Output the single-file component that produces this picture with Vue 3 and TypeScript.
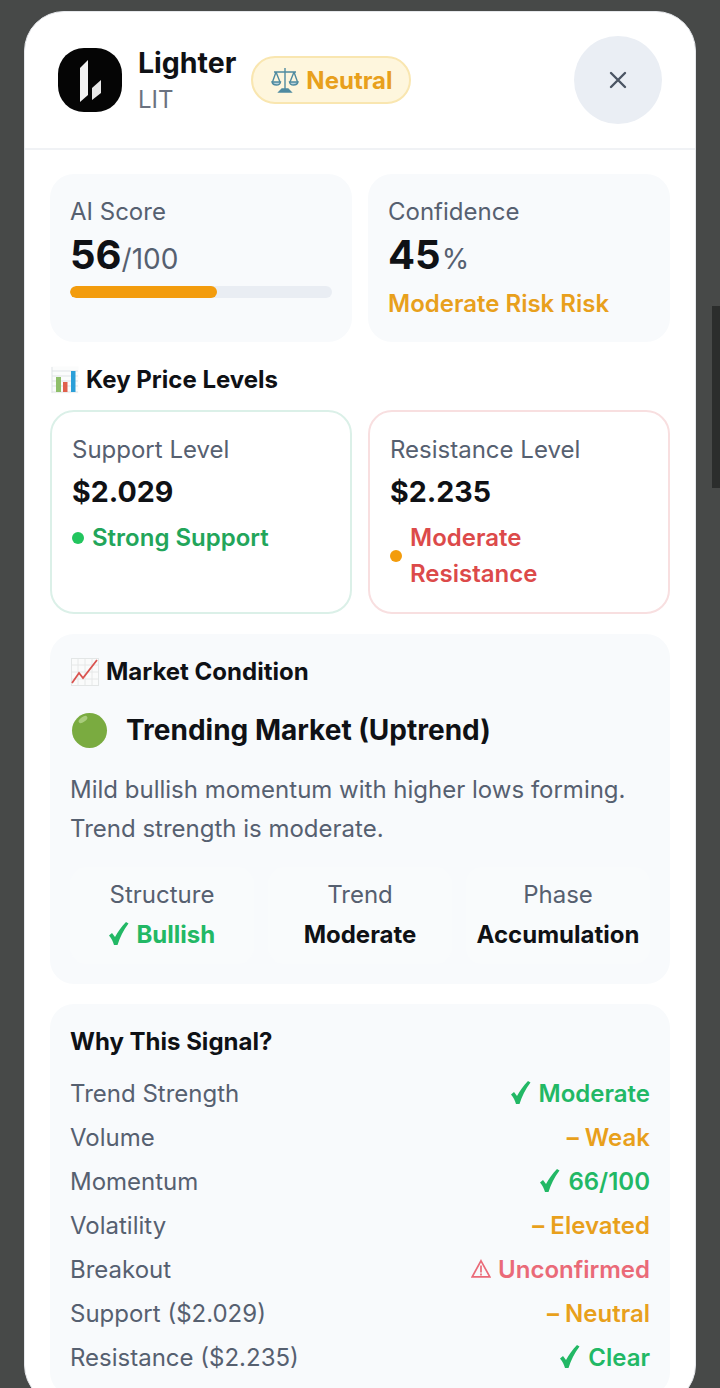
<script setup lang="ts">
interface Row {
  label: string
  mark: string
  value: string
  tone: 'good' | 'warn' | 'bad'
}
const rows: Row[] = [
  { label: 'Trend Strength', mark: '✓', value: 'Moderate', tone: 'good' },
  { label: 'Volume', mark: '–', value: 'Weak', tone: 'warn' },
  { label: 'Momentum', mark: '✓', value: '66/100', tone: 'good' },
  { label: 'Volatility', mark: '–', value: 'Elevated', tone: 'warn' },
  { label: 'Breakout', mark: '⚠', value: 'Unconfirmed', tone: 'bad' },
  { label: 'Support ($2.029)', mark: '–', value: 'Neutral', tone: 'warn' },
  { label: 'Resistance ($2.235)', mark: '✓', value: 'Clear', tone: 'good' },
]
const score = 56
const checkPath = 'M0 13.5 L3 11 L6 15 C9 9.5 12.5 4.5 17 0 L19.5 1.5 C14.5 8 11 15 8.5 23 L5 23 C4 19.5 2.5 16.5 0 13.5 Z'
</script>

<template>
  <div class="page">
    <div class="scrollbar"></div>
    <div class="modal">
      <header class="head">
        <svg class="logo" viewBox="0 0 64 64">
          <rect width="64" height="64" rx="26" fill="#050505" />
          <path d="M22 20 L30 12 L30 47 L22 54 Z" fill="#f2f2f2" />
          <path d="M34 40 L43 32 L43 45 L34 52 Z" fill="#e8e8e8" />
        </svg>
        <div class="coin">
          <div class="coin-name">Lighter</div>
          <div class="coin-sym">LIT</div>
        </div>
        <div class="badge">
          <svg class="scales" viewBox="0 0 28 28" fill="none" stroke="#4f8ba0" stroke-width="1.4">
            <path d="M14 2 V24 M3 6 H25 M5 6 L1.5 16 M5 6 L9 16 M23 6 L19 16 M23 6 L26.5 16" />
            <path d="M1 16 H9.5 C9 20 2 20 1 16 Z M18.5 16 H27 C26 20 19 20 18.5 16 Z" fill="#b9d3dc" />
            <path d="M8 26 H20 L17 23 H11 Z" fill="#4f8ba0" />
          </svg>
          <span>Neutral</span>
        </div>
        <button class="close">
          <svg viewBox="0 0 20 20" width="20" height="20" stroke="#4b5563" stroke-width="2.4" stroke-linecap="round">
            <path d="M3 3 L17 17 M17 3 L3 17" />
          </svg>
        </button>
      </header>

      <div class="body">
        <div class="two">
          <div class="tile">
            <div class="label">AI Score</div>
            <div class="big">{{ score }}<small>/100</small></div>
            <div class="track"><div class="fill" :style="{ width: score + '%' }"></div></div>
          </div>
          <div class="tile">
            <div class="label">Confidence</div>
            <div class="big">45<small class="pct">%</small></div>
            <div class="risk">Moderate Risk Risk</div>
          </div>
        </div>

        <div class="title section-title">
          <svg class="emoji" viewBox="0 0 28 28">
            <rect x="0.5" y="0.5" width="27" height="27" fill="#fbfcfc" />
            <path d="M1 5 H27 M1 10 H27 M1 15 H27 M1 20 H27 M1 26 H27 M1 1 V27" stroke="#dfe3e6" stroke-width="1" />
            <rect x="5" y="11" width="5" height="15" fill="#8fbf6a" />
            <rect x="12" y="16" width="4.5" height="10" fill="#e0604c" />
            <rect x="20" y="5" width="4.5" height="21" fill="#2b9fd8" />
          </svg>
          Key Price Levels
        </div>
        <div class="two">
          <div class="level support">
            <div class="label">Support Level</div>
            <div class="price">$2.029</div>
            <div class="status green"><i class="dot dot-green"></i><span>Strong Support</span></div>
          </div>
          <div class="level resist">
            <div class="label">Resistance Level</div>
            <div class="price">$2.235</div>
            <div class="status red"><i class="dot dot-orange"></i><span>Moderate Resistance</span></div>
          </div>
        </div>

        <div class="panel market">
          <div class="title">
            <svg class="emoji" viewBox="0 0 28 28">
              <rect x="0.5" y="0.5" width="27" height="27" fill="#fafbfb" stroke="#e3e6e6" />
              <path d="M7 1 V27 M14 1 V27 M21 1 V27 M1 7 H27 M1 14 H27 M1 21 H27" stroke="#e6e8e8" stroke-width="1" />
              <path d="M1 25 L8 15 L12 20 L26 2" fill="none" stroke="#d9534f" stroke-width="1.8" />
            </svg>
            Market Condition
          </div>
          <div class="regime">
            <i class="ball"></i>
            <span>Trending Market (Uptrend)</span>
          </div>
          <p class="desc">Mild bullish momentum with higher lows forming. Trend strength is moderate.</p>
          <div class="stats">
            <div class="stat">
              <div class="label">Structure</div>
              <div class="stat-val good">
                <svg class="check" viewBox="0 0 20 23"><path :d="checkPath" fill="currentColor" /></svg>
                Bullish
              </div>
            </div>
            <div class="stat">
              <div class="label">Trend</div>
              <div class="stat-val">Moderate</div>
            </div>
            <div class="stat">
              <div class="label">Phase</div>
              <div class="stat-val">Accumulation</div>
            </div>
          </div>
        </div>

        <div class="panel why">
          <div class="title">Why This Signal?</div>
          <div class="rows">
            <div v-for="row in rows" :key="row.label" class="row">
              <span class="label">{{ row.label }}</span>
              <span class="row-val" :class="row.tone">
                <svg v-if="row.mark === '✓'" class="check" viewBox="0 0 20 23"><path :d="checkPath" fill="currentColor" /></svg>
                <svg v-else-if="row.mark === '⚠'" class="alert" viewBox="0 0 20 19" fill="none" stroke="currentColor" stroke-width="1.7">
                  <path d="M10 1.8 L18.8 17.8 H1.2 Z" />
                  <path d="M10 6.5 V13.5 M10 14.5 V16.5" />
                </svg>
                <span v-else class="dash">{{ row.mark }}</span>
                {{ row.value }}
              </span>
            </div>
          </div>
        </div>
      </div>
    </div>
  </div>
</template>

<style scoped>
.page {
  position: relative;
  height: 1388px;
  overflow: hidden;
  background: #474948;
  padding: 11px 24px 0;
  box-sizing: border-box;
  font-family: Inter, "Liberation Sans", sans-serif;
  color: #0f1115;
}
.scrollbar {
  position: absolute;
  right: 0;
  top: 306px;
  width: 8px;
  height: 182px;
  background: #2b2d2c;
}
.modal {
  height: 1392px;
  background: #fff;
  border-radius: 40px;
  border: 1px solid #e5e7eb;
  overflow: hidden;
}
.head {
  display: flex;
  align-items: center;
  height: 136px;
  padding: 0 33px;
  border-bottom: 2px solid #f0f2f5;
}
.logo {
  width: 64px;
  height: 64px;
  flex: none;
}
.coin {
  display: flex;
  flex-direction: column;
  gap: 3px;
  margin: 3px 0 0 16px;
}
.coin-name {
  font-size: 28.5px;
  font-weight: 700;
  line-height: 34px;
}
.coin-sym {
  font-size: 24px;
  line-height: 34px;
  color: #6b7280;
}
.badge {
  display: flex;
  align-items: center;
  gap: 7px;
  margin-left: 15px;
  height: 44px;
  padding: 0 16px 0 18px;
  border: 2px solid #f9e6b0;
  border-radius: 24px;
  background: #fef6dd;
  color: #e8a01c;
  font-size: 24px;
  font-weight: 700;
}
.scales {
  width: 28px;
  height: 28px;
}
.close {
  margin-left: auto;
  width: 88px;
  height: 88px;
  border: 0;
  border-radius: 50%;
  background: #eaeef4;
  display: flex;
  align-items: center;
  justify-content: center;
  padding: 0;
}
.body {
  display: flex;
  flex-direction: column;
  padding: 24px 25px 0;
}
.two {
  display: grid;
  grid-template-columns: 1fr 1fr;
  gap: 16px;
}
.tile {
  padding: 20px;
  height: 168px;
  box-sizing: border-box;
  background: #f8fafc;
  border-radius: 24px;
}
.label {
  font-size: 24px;
  line-height: 36px;
  color: #566070;
}
.big {
  padding-top: 2px;
  font-size: 40px;
  font-weight: 700;
  line-height: 46px;
}
.big small {
  font-size: 28px;
  font-weight: 400;
  line-height: 1;
  color: #566070;
}
.big .pct {
  margin-left: 1px;
}
.track {
  margin-top: 8px;
  height: 12px;
  border-radius: 6px;
  background: #e9edf3;
  overflow: hidden;
}
.fill {
  height: 100%;
  background: #f39c0d;
  border-radius: 6px;
}
.risk {
  margin-top: 8px;
  font-size: 24px;
  line-height: 36px;
  font-weight: 600;
  color: #e8a01c;
}
.title {
  display: flex;
  align-items: center;
  gap: 7px;
  font-size: 24px;
  font-weight: 700;
  line-height: 36px;
}
.section-title {
  margin: 20px 0 12px;
}
.emoji {
  width: 28px;
  height: 28px;
  flex: none;
  margin-left: 1px;
}
.level {
  padding: 20px;
  border-radius: 24px;
  background: #fff;
}
.support {
  border: 2px solid #dbf0e8;
}
.resist {
  border: 2px solid #f8dfe0;
}
.price {
  padding-top: 2px;
  font-size: 28.6px;
  font-weight: 700;
  line-height: 44px;
}
.status {
  display: flex;
  align-items: center;
  gap: 8px;
  margin-top: 6px;
  font-size: 24px;
  font-weight: 600;
  line-height: 36px;
}
.status span {
  flex: 1;
}
.support .status {
  align-items: flex-start;
}
.support .dot {
  margin-top: 12px;
}
.green {
  color: #22a55a;
}
.red {
  color: #dc4a4a;
}
.dot {
  flex: none;
  width: 12px;
  height: 12px;
  border-radius: 50%;
}
.dot-green {
  background: #22c55e;
}
.dot-orange {
  background: #f39c0d;
}
.panel {
  background: #f8fafc;
  border-radius: 24px;
  padding: 20px;
}
.market {
  margin-top: 20px;
}
.regime {
  display: flex;
  align-items: center;
  gap: 19px;
  margin-top: 18px;
  height: 44px;
  font-size: 28px;
  font-weight: 700;
}
.ball {
  position: relative;
  width: 35px;
  height: 35px;
  margin-left: 2px;
  border-radius: 50%;
  background: radial-gradient(circle at 50% 45%, #7aab40 70%, #6a9a35 100%);
}
.ball::after {
  content: "";
  position: absolute;
  left: 6px;
  top: 4px;
  width: 10px;
  height: 5px;
  border-radius: 50%;
  background: #a9cc7c;
  transform: rotate(-35deg);
}
.desc {
  margin: 18px 0 0;
  font-size: 24px;
  line-height: 39px;
  color: #566070;
}
.stats {
  display: grid;
  grid-template-columns: repeat(3, 1fr);
  gap: 14px;
  margin-top: 19px;
}
.stat {
  padding: 10px 0 11px;
  text-align: center;
  border-radius: 16px;
  background: #f9fbfc;
}
.stat-val {
  margin-top: 4px;
  font-size: 24px;
  font-weight: 700;
  line-height: 36px;
  white-space: nowrap;
}
.check {
  width: 20px;
  height: 23px;
  margin-right: 2px;
  vertical-align: -2px;
}
.alert {
  width: 20px;
  height: 19px;
  margin-right: 1px;
}
.why {
  margin-top: 20px;
}
.rows {
  display: flex;
  flex-direction: column;
  gap: 8px;
  margin-top: 16px;
}
.row {
  display: flex;
  justify-content: space-between;
}
.row-val {
  font-size: 24px;
  font-weight: 600;
  line-height: 36px;
}
.good {
  color: #22b865;
}
.warn {
  color: #e8a01c;
}
.bad {
  color: #ea6a78;
}
.dash {
  font-weight: 700;
}
</style>
